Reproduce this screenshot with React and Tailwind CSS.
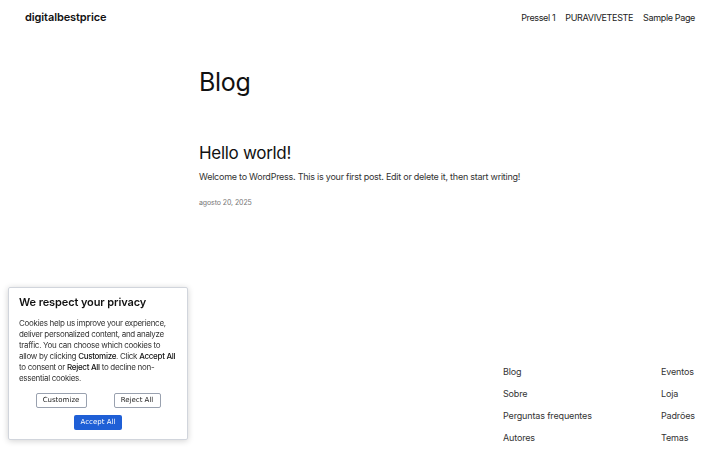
import { useState } from "react";

const font = { fontFamily: "Inter, 'Noto Sans', sans-serif" };

function CookieBanner() {
  const [open, setOpen] = useState(true);
  if (!open) return null;

  return (
    <div className="fixed left-[8px] bottom-[10px] w-[180px] bg-white border border-gray-300 rounded-[2px] shadow-[0_1px_6px_rgba(0,0,0,0.18)] px-[10px] pt-[6px] pb-[9px]">
      <h2 className="text-[11px] font-semibold text-[#111] tracking-[-0.1px]">
        We respect your privacy
      </h2>
      <p className="mt-[8px] text-[8px] leading-[11px] text-[#333] tracking-[-0.3px]">
        Cookies help us improve your experience, deliver personalized content,
        and analyze traffic. You can choose which cookies to allow by clicking{" "}
        <span className="font-medium text-[#111]">Customize</span>. Click{" "}
        <span className="font-medium text-[#111]">Accept All</span> to consent
        or <span className="font-medium text-[#111]">Reject All</span> to
        decline non-essential cookies.
      </p>
      <div
        className="flex justify-center gap-[27px] mt-[9px]"
        style={{ fontFamily: "'DejaVu Sans', sans-serif" }}
      >
        <button
          onClick={() => setOpen(false)}
          className="h-[15px] w-[51px] border border-gray-400 rounded-[2px] text-[7px] text-[#222] bg-white"
        >
          Customize
        </button>
        <button
          onClick={() => setOpen(false)}
          className="h-[15px] w-[47px] border border-gray-400 rounded-[2px] text-[7px] text-[#222] bg-white"
        >
          Reject All
        </button>
      </div>
      <div
        className="flex justify-center mt-[7px]"
        style={{ fontFamily: "'DejaVu Sans', sans-serif" }}
      >
        <button
          onClick={() => setOpen(false)}
          className="h-[15px] w-[48px] rounded-[2px] text-[7px] text-white bg-[#1f5fd6]"
        >
          Accept All
        </button>
      </div>
    </div>
  );
}

export default function App() {
  const footerLeft = ["Blog", "Sobre", "Perguntas frequentes", "Autores"];
  const footerRight = ["Eventos", "Loja", "Padrões", "Temas"];

  return (
    <div className="h-[450px] overflow-hidden bg-white text-[#111]" style={font}>
      <header className="flex items-center justify-between px-[25px] h-[35px]">
        <a className="text-[11px] font-semibold tracking-[-0.1px]">
          digitalbestprice
        </a>
        <nav className="flex gap-[10px] text-[9px] text-[#222] tracking-[-0.35px]">
          <a>Pressel 1</a>
          <a>PURAVIVETESTE</a>
          <a>Sample Page</a>
        </nav>
      </header>

      <main className="w-[322px] mx-auto pt-[32px] h-[299px]">
        <h1 className="text-[25px] leading-[30px] tracking-[-0.3px]">Blog</h1>
        <article className="mt-[45px]">
          <h2 className="text-[17px] leading-[22px] tracking-[-0.3px]">
            Hello world!
          </h2>
          <p className="mt-[6px] text-[9px] text-[#333] tracking-[-0.25px] whitespace-nowrap">
            Welcome to WordPress. This is your first post. Edit or delete it,
            then start writing!
          </p>
          <p className="mt-[14px] text-[7px] text-[#777] tracking-[-0.1px]">
            agosto 20, 2025
          </p>
        </article>
      </main>

      <footer className="flex justify-end pr-[25px] pt-[31px] text-[9px] text-[#333] tracking-[-0.15px]">
        <ul className="flex flex-col gap-[8px] w-[158px]">
          {footerLeft.map((l) => (
            <li key={l} className="leading-[14px]">
              {l}
            </li>
          ))}
        </ul>
        <ul className="flex flex-col gap-[8px] w-[34px]">
          {footerRight.map((l) => (
            <li key={l} className="leading-[14px]">
              {l}
            </li>
          ))}
        </ul>
      </footer>

      <CookieBanner />
    </div>
  );
}
